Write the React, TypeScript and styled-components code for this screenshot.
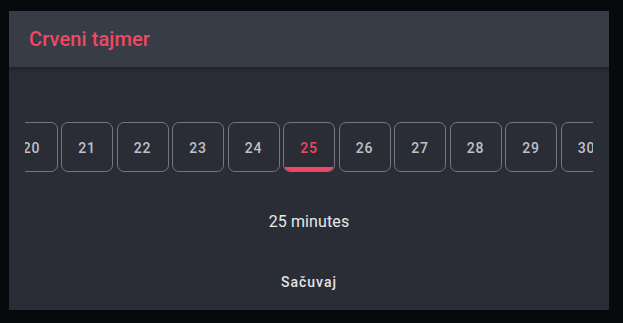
import { createGlobalStyle } from 'styled-components'
import styled from 'styled-components'

const GlobalStyle = createGlobalStyle`
  html, body {
    margin: 0;
    padding: 0;
    background: #08090c;
    font-family: Roboto, 'Liberation Sans', sans-serif;
  }
`

const Backdrop = styled.div`
  width: 623px;
  height: 323px;
  padding: 11px 14px 13px 9px;
  box-sizing: border-box;
`

const Dialog = styled.div`
  width: 600px;
  height: 299px;
  background: #2a2d36;
  display: flex;
  flex-direction: column;
  overflow: hidden;
`

const Header = styled.div`
  height: 56px;
  flex: none;
  background: #383c47;
  display: flex;
  align-items: center;
  padding: 0 20px;
  box-shadow: 0 2px 5px rgba(0, 0, 0, 0.3);
  position: relative;
  z-index: 1;
`

const Title = styled.h2`
  margin: 0;
  font-size: 20px;
  font-weight: 500;
  color: #f04862;
  letter-spacing: 0.1px;
`

const Body = styled.div`
  flex: 1;
  display: flex;
  flex-direction: column;
  align-items: center;
  padding: 55px 16px 0;
`

const Strip = styled.div`
  width: 568px;
  height: 50px;
  overflow: hidden;
  position: relative;
`

const Track = styled.div`
  display: flex;
  gap: 3.5px;
  position: absolute;
  left: -19.5px;
  top: 0;
`

const Chip = styled.div<{ $active?: boolean }>`
  width: 52px;
  height: 50px;
  flex: none;
  box-sizing: border-box;
  border: 1px solid #75777e;
  border-radius: 7px;
  display: flex;
  align-items: center;
  justify-content: center;
  font-size: 14px;
  font-weight: 500;
  letter-spacing: 0.8px;
  color: ${(p) => (p.$active ? '#f04862' : '#bfc1c7')};
  position: relative;
  overflow: hidden;
  padding-top: 1px;

  &::after {
    content: '';
    display: ${(p) => (p.$active ? 'block' : 'none')};
    position: absolute;
    left: 0;
    right: 0;
    bottom: 0;
    height: 4px;
    background: #f04862;
  }
`

const Value = styled.div`
  margin-top: 40px;
  font-size: 16px;
  color: #e8e8ea;
  letter-spacing: 0.1px;
`

const SaveButton = styled.button`
  margin-top: 33px;
  height: 36px;
  padding: 0 16px;
  background: transparent;
  border: none;
  font-family: inherit;
  font-size: 14px;
  font-weight: 500;
  letter-spacing: 1px;
  color: #e2e3e8;
  cursor: pointer;
`

const minutes = Array.from({ length: 11 }, (_, i) => 20 + i)

export default function App() {
  return (
    <>
      <GlobalStyle />
      <Backdrop>
        <Dialog>
          <Header>
            <Title>Crveni tajmer</Title>
          </Header>
          <Body>
            <Strip>
              <Track>
                {minutes.map((m) => (
                  <Chip key={m} $active={m === 25}>
                    {m}
                  </Chip>
                ))}
              </Track>
            </Strip>
            <Value>25 minutes</Value>
            <SaveButton>Sačuvaj</SaveButton>
          </Body>
        </Dialog>
      </Backdrop>
    </>
  )
}
